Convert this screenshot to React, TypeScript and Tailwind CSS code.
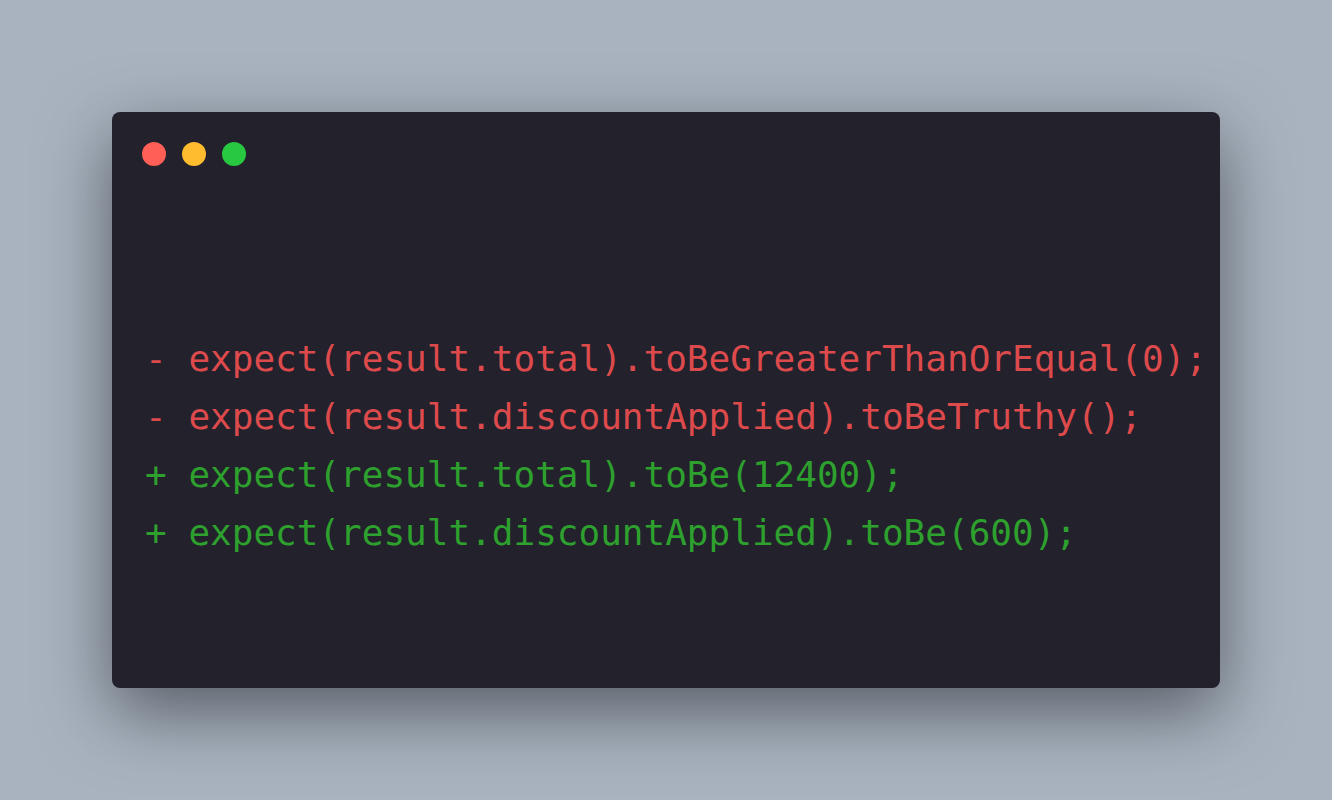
export default function App() {
  const lines = [
    { sign: "-", text: "expect(result.total).toBeGreaterThanOrEqual(0);", color: "text-[#dd4a4c]" },
    { sign: "-", text: "expect(result.discountApplied).toBeTruthy();", color: "text-[#dd4a4c]" },
    { sign: "+", text: "expect(result.total).toBe(12400);", color: "text-[#2ea02e]" },
    { sign: "+", text: "expect(result.discountApplied).toBe(600);", color: "text-[#2ea02e]" },
  ];
  return (
    <div className="w-[1332px] h-[800px] bg-[#a9b3bf] flex items-start justify-center pt-[112px] overflow-hidden">
      <div className="w-[1108px] h-[576px] bg-[#22212c] rounded-[8px] p-[30px] shadow-[0_24px_70px_rgba(20,24,30,0.55)] flex flex-col">
        <div className="flex gap-[16px]">
          <div className="w-[24px] h-[24px] rounded-full bg-[#ff5f57]" />
          <div className="w-[24px] h-[24px] rounded-full bg-[#febc2e]" />
          <div className="w-[24px] h-[24px] rounded-full bg-[#28c840]" />
        </div>
        <div className="mt-[164px] ml-[3px] font-['DejaVu_Sans_Mono',monospace] text-[36px] leading-[58px] whitespace-pre">
          {lines.map((l, i) => (
            <div key={i} className={l.color}>
              {l.sign} {l.text}
            </div>
          ))}
        </div>
      </div>
    </div>
  );
}
